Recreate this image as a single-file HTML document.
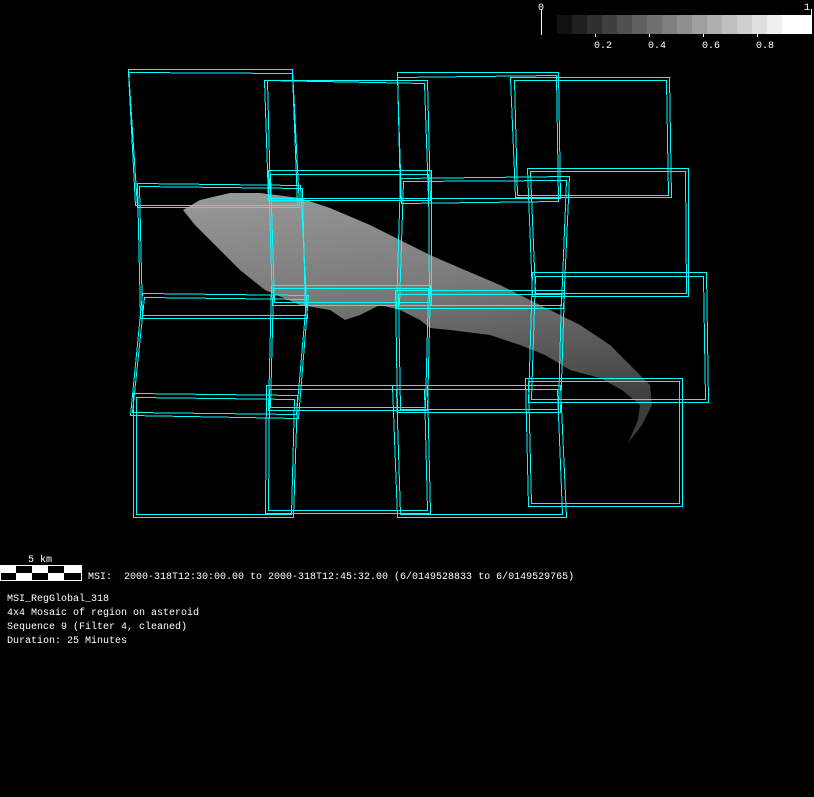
<!DOCTYPE html>
<html><head><meta charset="utf-8"><style>
html,body{margin:0;padding:0;background:#000;}
body{width:814px;height:797px;overflow:hidden;position:relative;}
svg{position:absolute;left:0;top:0;}
text{font-family:"Liberation Mono",monospace;font-size:10px;fill:#fff;white-space:pre;}
</style></head><body>
<svg width="814" height="797" viewBox="0 0 814 797">
<defs>
<linearGradient id="ag" x1="0" y1="0" x2="0.2" y2="1">
<stop offset="0" stop-color="#9a9a9a"/><stop offset="0.45" stop-color="#7a7a7a"/><stop offset="1" stop-color="#3c3c3c"/>
</linearGradient>
</defs>
<path d="M183,210 L200,200 L230,193 L260,193 L300,198 L330,208 L370,225 L400,240 L430,255 L460,268 L500,285 L540,305 L580,325 L610,345 L630,365 L650,385 L652,405 L642,425 L628,443 L638,420 L640,405 L622,390 L600,378 L570,370 L545,355 L520,345 L490,335 L450,330 L430,328 L420,320 L400,310 L380,305 L360,315 L345,320 L330,310 L300,305 L265,290 L240,270 L215,245 L195,225 Z" fill="url(#ag)"/>
<g fill="none" stroke="#0ff" stroke-width="1" shape-rendering="crispEdges">
<path d="M128.5,69.5 L292.5,69.5 L299.5,207.5 L137.5,207.5 Z"/>
<path d="M128.5,72.5 L292.5,73.5 L297.5,205.5 L135.5,205.5 Z"/>
<path d="M264.5,80.5 L427.5,80.5 L430.5,200.5 L268.5,200.5 Z"/>
<path d="M267.5,80.5 L424.5,83.5 L428.5,198.5 L270.5,198.5 Z"/>
<path d="M397.5,72.5 L558.5,72.5 L560.5,198.5 L400.5,198.5 Z"/>
<path d="M397.5,77.5 L556.5,75.5 L558.5,201.5 L401.5,203.5 Z"/>
<path d="M510.5,77.5 L669.5,77.5 L671.5,197.5 L515.5,197.5 Z"/>
<path d="M514.5,80.5 L666.5,80.5 L668.5,195.5 L517.5,195.5 Z"/>
<path d="M137.5,183.5 L300.5,185.5 L307.5,318.5 L140.5,318.5 Z"/>
<path d="M139.5,186.5 L302.5,188.5 L305.5,315.5 L142.5,315.5 Z"/>
<path d="M268.5,170.5 L431.5,170.5 L431.5,305.5 L272.5,305.5 Z"/>
<path d="M270.5,174.5 L428.5,174.5 L429.5,302.5 L274.5,302.5 Z"/>
<path d="M400.5,178.5 L569.5,176.5 L563.5,308.5 L396.5,308.5 Z"/>
<path d="M403.5,181.5 L566.5,180.5 L561.5,305.5 L399.5,305.5 Z"/>
<path d="M527.5,168.5 L688.5,168.5 L688.5,296.5 L532.5,296.5 Z"/>
<path d="M530.5,171.5 L685.5,171.5 L686.5,293.5 L535.5,293.5 Z"/>
<path d="M142.5,293.5 L308.5,295.5 L298.5,418.5 L130.5,415.5 Z"/>
<path d="M144.5,297.5 L306.5,299.5 L296.5,414.5 L132.5,412.5 Z"/>
<path d="M271.5,285.5 L430.5,285.5 L427.5,410.5 L268.5,410.5 Z"/>
<path d="M273.5,288.5 L428.5,288.5 L425.5,407.5 L270.5,407.5 Z"/>
<path d="M395.5,290.5 L564.5,290.5 L560.5,412.5 L397.5,412.5 Z"/>
<path d="M398.5,294.5 L561.5,294.5 L558.5,409.5 L400.5,409.5 Z"/>
<path d="M532.5,272.5 L706.5,272.5 L708.5,402.5 L528.5,402.5 Z"/>
<path d="M535.5,276.5 L703.5,276.5 L705.5,399.5 L531.5,399.5 Z"/>
<path d="M133.5,393.5 L297.5,395.5 L293.5,517.5 L133.5,517.5 Z"/>
<path d="M136.5,397.5 L294.5,399.5 L291.5,514.5 L136.5,514.5 Z"/>
<path d="M266.5,385.5 L427.5,385.5 L430.5,513.5 L265.5,513.5 Z"/>
<path d="M269.5,389.5 L424.5,389.5 L427.5,510.5 L268.5,510.5 Z"/>
<path d="M392.5,385.5 L560.5,385.5 L566.5,517.5 L397.5,517.5 Z"/>
<path d="M396.5,389.5 L557.5,389.5 L562.5,514.5 L400.5,514.5 Z"/>
<path d="M525.5,378.5 L682.5,378.5 L682.5,506.5 L528.5,506.5 Z"/>
<path d="M528.5,381.5 L679.5,381.5 L679.5,503.5 L531.5,503.5 Z"/>
</g>
<line x1="541.5" y1="9" x2="541.5" y2="35" stroke="#fff"/>
<line x1="811.5" y1="9" x2="811.5" y2="15" stroke="#fff"/>
<text x="538" y="10">0</text>
<text x="804" y="10">1</text>
<g>
<rect x="557" y="15" width="15" height="19" fill="#111"/>
<rect x="572" y="15" width="15" height="19" fill="#202020"/>
<rect x="587" y="15" width="15" height="19" fill="#303030"/>
<rect x="602" y="15" width="15" height="19" fill="#404040"/>
<rect x="617" y="15" width="15" height="19" fill="#505050"/>
<rect x="632" y="15" width="15" height="19" fill="#606060"/>
<rect x="647" y="15" width="15" height="19" fill="#707070"/>
<rect x="662" y="15" width="15" height="19" fill="#7f7f7f"/>
<rect x="677" y="15" width="15" height="19" fill="#8f8f8f"/>
<rect x="692" y="15" width="15" height="19" fill="#9f9f9f"/>
<rect x="707" y="15" width="15" height="19" fill="#afafaf"/>
<rect x="722" y="15" width="15" height="19" fill="#bfbfbf"/>
<rect x="737" y="15" width="15" height="19" fill="#cfcfcf"/>
<rect x="752" y="15" width="15" height="19" fill="#dfdfdf"/>
<rect x="767" y="15" width="15" height="19" fill="#efefef"/>
<rect x="782" y="15" width="30" height="19" fill="#fff"/>
</g>
<g stroke="#fff"><line x1="595.5" y1="34" x2="595.5" y2="37"/><line x1="649.5" y1="34" x2="649.5" y2="37"/><line x1="703.5" y1="34" x2="703.5" y2="37"/><line x1="757.5" y1="34" x2="757.5" y2="37"/></g>
<text x="594" y="48">0.2</text>
<text x="648" y="48">0.4</text>
<text x="702" y="48">0.6</text>
<text x="756" y="48">0.8</text>
<text x="28" y="562">5 km</text>
<rect x="0.5" y="565.5" width="81" height="15" fill="#000" stroke="#fff"/>
<g fill="#fff">
<rect x="0" y="565" width="16" height="8"/><rect x="32" y="565" width="16" height="8"/><rect x="64" y="565" width="17" height="8"/>
<rect x="16" y="573" width="16" height="8"/><rect x="48" y="573" width="16" height="8"/>
</g>
<text x="88" y="579" xml:space="preserve">MSI:  2000-318T12:30:00.00 to 2000-318T12:45:32.00 (6/0149528833 to 6/0149529765)</text>
<text x="7" y="601">MSI_RegGlobal_318</text>
<text x="7" y="615">4x4 Mosaic of region on asteroid</text>
<text x="7" y="629">Sequence 9 (Filter 4, cleaned)</text>
<text x="7" y="643">Duration: 25 Minutes</text>
</svg>
</body></html>
